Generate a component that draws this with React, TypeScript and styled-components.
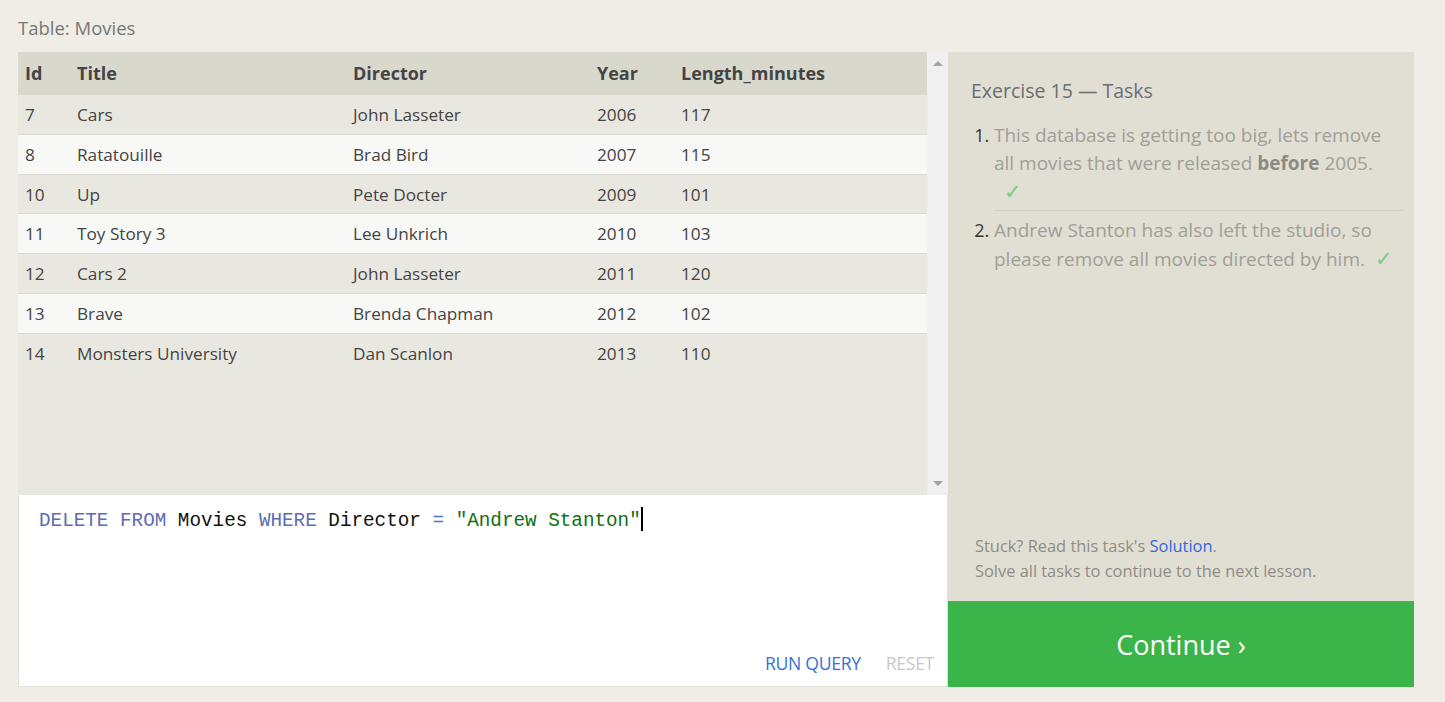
import React from 'react';
import styled, { createGlobalStyle } from 'styled-components';

const GlobalStyle = createGlobalStyle`
  html, body {
    margin: 0;
    padding: 0;
    background: #f0ede6;
    font-family: 'Open Sans', 'Noto Sans', sans-serif;
  }
`;

interface Movie {
  id: number;
  title: string;
  director: string;
  year: number;
  length: number;
}

const movies: Movie[] = [
  { id: 7, title: 'Cars', director: 'John Lasseter', year: 2006, length: 117 },
  { id: 8, title: 'Ratatouille', director: 'Brad Bird', year: 2007, length: 115 },
  { id: 10, title: 'Up', director: 'Pete Docter', year: 2009, length: 101 },
  { id: 11, title: 'Toy Story 3', director: 'Lee Unkrich', year: 2010, length: 103 },
  { id: 12, title: 'Cars 2', director: 'John Lasseter', year: 2011, length: 120 },
  { id: 13, title: 'Brave', director: 'Brenda Chapman', year: 2012, length: 102 },
  { id: 14, title: 'Monsters University', director: 'Dan Scanlon', year: 2013, length: 110 },
];

const Page = styled.div`
  padding: 15px 31px 15px 18px;
`;

const Caption = styled.div`
  font-size: 18.5px;
  color: #777;
  height: 37px;
  line-height: 26px;
`;

const Workspace = styled.div`
  display: flex;
  height: 635px;
`;

const LeftPanel = styled.div`
  width: 930px;
  display: flex;
  flex-direction: column;
`;

const TableWrap = styled.div`
  height: 443px;
  display: flex;
  background: #e9e8e0;
`;

const TableArea = styled.div`
  flex: 1;
`;

const Grid = styled.div`
  display: grid;
  grid-template-columns: 52px 276px 244px 84px 1fr;
`;

const HeadCell = styled.div`
  background: #d9d8cc;
  height: 43px;
  line-height: 43px;
  padding-left: 7px;
  font-weight: 700;
  font-size: 18px;
  color: #444;
`;

const Cell = styled.div<{ $odd: boolean; $last: boolean }>`
  background: ${(p) => (p.$odd ? '#f8f8f7' : '#e9e8e0')};
  height: 37.75px;
  line-height: 37.75px;
  padding: 1px 0 0 7px;
  border-bottom: ${(p) => (p.$last ? 'none' : '1px solid #dcdbd3')};
  font-size: 17.2px;
  color: #444;
`;

const Scrollbar = styled.div`
  width: 21px;
  background: #f0f0f0;
  display: flex;
  flex-direction: column;
  justify-content: space-between;
  align-items: center;
  padding: 9px 0;
  box-sizing: border-box;
`;

const Arrow = styled.div<{ $down?: boolean }>`
  width: 0;
  height: 0;
  border-left: 5px solid transparent;
  border-right: 5px solid transparent;
  ${(p) =>
    p.$down ? 'border-top: 5px solid #a3a3a3;' : 'border-bottom: 5px solid #a3a3a3;'}
`;

const Editor = styled.div`
  flex: 1;
  background: #fff;
  border: 1px solid #e3e1d8;
  border-top: none;
  display: flex;
  flex-direction: column;
  justify-content: space-between;
`;

const Code = styled.div`
  font-family: 'Liberation Mono', 'DejaVu Sans Mono', monospace;
  font-size: 19.3px;
  padding: 12px 20px;
  color: #111;
  white-space: pre;
`;

const Token = styled.span<{ $kind: 'kw' | 'op' | 'str' | 'id' }>`
  color: ${(p) =>
    p.$kind === 'kw' ? '#5b6db3' : p.$kind === 'op' ? '#4a78c8' : p.$kind === 'str' ? '#107010' : '#111'};
`;

const Caret = styled.span`
  display: inline-block;
  width: 2px;
  height: 24px;
  background: #000;
  vertical-align: -5px;
`;

const EditorActions = styled.div`
  display: flex;
  justify-content: flex-end;
  gap: 25px;
  padding: 0 13px 11px 0;
`;

const ActionButton = styled.span<{ $disabled?: boolean }>`
  font-size: 17.6px;
  color: ${(p) => (p.$disabled ? '#c8c8c8' : '#3372d9')};
  letter-spacing: -0.3px;
`;

const RightPanel = styled.div`
  width: 466px;
  display: flex;
  flex-direction: column;
  background: #e1dfd4;
`;

const TaskBody = styled.div`
  flex: 1;
  padding: 25px 11px 0 23px;
  display: flex;
  flex-direction: column;
`;

const TaskTitle = styled.div`
  font-size: 19.5px;
  color: #6b6e75;
  margin-bottom: 17px;
`;

const TaskList = styled.ol`
  margin: 0;
  padding-left: 23px;
  font-size: 19px;
  line-height: 28px;
  color: #333;
`;

const TaskItem = styled.li<{ $last?: boolean }>`
  padding: 0 0 ${(p) => (p.$last ? 0 : 4)}px;
  border-bottom: ${(p) => (p.$last ? 'none' : '1px solid #d3d1c6')};
  margin-bottom: 5px;
  &::marker {
    font-size: 18px;
  }
`;

const TaskText = styled.span`
  color: #a09e98;
  b {
    color: #8c8a84;
  }
`;

const Check = styled.span`
  color: #7dc97d;
  font-size: 21px;
  margin-left: 10px;
`;

const Hint = styled.div`
  margin-top: auto;
  padding: 0 0 18px 4px;
  font-size: 16.4px;
  line-height: 25px;
  color: #8f8c86;
  a {
    color: #3366dd;
    text-decoration: none;
  }
`;

const ContinueButton = styled.div`
  height: 86px;
  background: #3bb54a;
  color: #fff;
  font-size: 27px;
  display: flex;
  align-items: center;
  justify-content: center;
`;

const columns = ['Id', 'Title', 'Director', 'Year', 'Length_minutes'];

export default function App() {
  return (
    <>
      <GlobalStyle />
      <Page>
        <Caption>Table: Movies</Caption>
        <Workspace>
          <LeftPanel>
            <TableWrap>
              <TableArea>
                <Grid>
                  {columns.map((c) => (
                    <HeadCell key={c}>{c}</HeadCell>
                  ))}
                  {movies.map((m, i) =>
                    [m.id, m.title, m.director, m.year, m.length].map((v, j) => (
                      <Cell key={`${m.id}-${j}`} $odd={i % 2 === 1} $last={i === movies.length - 1}>
                        {v}
                      </Cell>
                    ))
                  )}
                </Grid>
              </TableArea>
              <Scrollbar>
                <Arrow />
                <Arrow $down />
              </Scrollbar>
            </TableWrap>
            <Editor>
              <Code>
                <Token $kind="kw">DELETE FROM</Token> <Token $kind="id">Movies</Token>{' '}
                <Token $kind="kw">WHERE</Token> <Token $kind="id">Director</Token>{' '}
                <Token $kind="op">=</Token> <Token $kind="str">"Andrew Stanton"</Token>
                <Caret />
              </Code>
              <EditorActions>
                <ActionButton>RUN QUERY</ActionButton>
                <ActionButton $disabled>RESET</ActionButton>
              </EditorActions>
            </Editor>
          </LeftPanel>
          <RightPanel>
            <TaskBody>
              <TaskTitle>Exercise 15 — Tasks</TaskTitle>
              <TaskList>
                <TaskItem>
                  <TaskText>
                    This database is getting too big, lets remove all movies that were released{' '}
                    <b>before</b> 2005.
                  </TaskText>
                  <br />
                  <Check>✓</Check>
                </TaskItem>
                <TaskItem $last>
                  <TaskText>
                    Andrew Stanton has also left the studio, so please remove all movies directed by him.
                  </TaskText>
                  <Check>✓</Check>
                </TaskItem>
              </TaskList>
              <Hint>
                Stuck? Read this task's <a href="#">Solution</a>.
                <br />
                Solve all tasks to continue to the next lesson.
              </Hint>
            </TaskBody>
            <ContinueButton>Continue ›</ContinueButton>
          </RightPanel>
        </Workspace>
      </Page>
    </>
  );
}
